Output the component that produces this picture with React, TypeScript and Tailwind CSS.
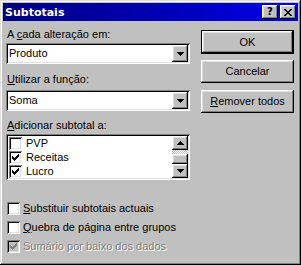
import React from "react";

const raised =
  "shadow-[inset_-1px_-1px_#000,inset_1px_1px_#fff,inset_-2px_-2px_#808080,inset_2px_2px_#dfdfdf]";
const sunken =
  "shadow-[inset_1px_1px_#808080,inset_-1px_-1px_#fff,inset_2px_2px_#000,inset_-2px_-2px_#dfdfdf]";

const DownArrow = () => (
  <svg width="7" height="4" viewBox="0 0 7 4" shapeRendering="crispEdges">
    <rect x="0" y="0" width="7" height="1" fill="#000" />
    <rect x="1" y="1" width="5" height="1" fill="#000" />
    <rect x="2" y="2" width="3" height="1" fill="#000" />
    <rect x="3" y="3" width="1" height="1" fill="#000" />
  </svg>
);

const UpArrow = () => (
  <svg width="7" height="4" viewBox="0 0 7 4" shapeRendering="crispEdges">
    <rect x="3" y="0" width="1" height="1" fill="#000" />
    <rect x="2" y="1" width="3" height="1" fill="#000" />
    <rect x="1" y="2" width="5" height="1" fill="#000" />
    <rect x="0" y="3" width="7" height="1" fill="#000" />
  </svg>
);

const Check = ({ color = "#000" }: { color?: string }) => (
  <svg width="7" height="7" viewBox="0 0 7 7" shapeRendering="crispEdges">
    <rect x="6" y="0" width="1" height="1" fill={color} />
    <rect x="5" y="1" width="2" height="1" fill={color} />
    <rect x="0" y="2" width="1" height="1" fill={color} />
    <rect x="4" y="2" width="3" height="1" fill={color} />
    <rect x="0" y="3" width="2" height="1" fill={color} />
    <rect x="3" y="3" width="3" height="1" fill={color} />
    <rect x="0" y="4" width="5" height="1" fill={color} />
    <rect x="1" y="5" width="3" height="1" fill={color} />
    <rect x="2" y="6" width="1" height="1" fill={color} />
  </svg>
);

const CheckBox = ({
  checked,
  disabled,
}: {
  checked?: boolean;
  disabled?: boolean;
}) => (
  <div
    className={`w-[13px] h-[13px] shrink-0 flex items-center justify-center ${sunken} ${
      disabled ? "bg-[#c0c0c0]" : "bg-white"
    }`}
  >
    {checked && <Check color={disabled ? "#808080" : "#000"} />}
  </div>
);

const Combo = ({ value }: { value: string }) => (
  <div className={`h-[21px] bg-white flex items-center p-[2px] ${sunken}`}>
    <span className="flex-1 pl-[1px]">{value}</span>
    <div className={`w-[16px] h-[17px] bg-[#c0c0c0] flex items-center justify-center ${raised}`}>
      <DownArrow />
    </div>
  </div>
);

const items = [
  { label: "PVP", checked: false },
  { label: "Receitas", checked: true },
  { label: "Lucro", checked: true },
];

const App = () => {
  return (
    <div className="w-[301px] h-[265px] bg-[#c0c0c0] p-[3px] shadow-[inset_-1px_-1px_#000,inset_1px_1px_#dfdfdf,inset_-2px_-2px_#808080,inset_2px_2px_#fff] font-['Liberation_Sans',sans-serif] text-[11px] leading-[13px] text-black overflow-hidden">
      {/* Title bar */}
      <div className="h-[18px] flex items-center justify-between pl-[2px] pr-[2px] bg-linear-to-r from-[#000080] to-[#0000e8]">
        <span className="font-['DejaVu_Sans',sans-serif] font-bold text-white text-[11px]">
          Subtotais
        </span>
        <div className="flex gap-[2px]">
          <div className={`w-[16px] h-[14px] bg-[#c0c0c0] flex items-center justify-center ${raised}`}>
            <span className="font-['DejaVu_Sans',sans-serif] font-bold text-[10px] leading-[10px] pb-[1px]">?</span>
          </div>
          <div className={`w-[16px] h-[14px] bg-[#c0c0c0] flex items-center justify-center ${raised}`}>
            <svg width="8" height="7" viewBox="0 0 8 7" shapeRendering="crispEdges">
              <path d="M0 0h2v1h-2zM6 0h2v1h-2zM1 1h2v1h-2zM5 1h2v1h-2zM2 2h4v1h-4zM3 3h2v1h-2zM2 4h4v1h-4zM1 5h2v1h-2zM5 5h2v1h-2zM0 6h2v1h-2zM6 6h2v1h-2z" fill="#000" />
            </svg>
          </div>
        </div>
      </div>

      <div className="flex pl-[3px]">
        {/* Left column */}
        <div className="w-[184px]">
          <div className="mt-[7px] pl-[1px]">
            A <span className="underline">c</span>ada alteração em:
          </div>
          <div className="mt-[2px]">
            <Combo value="Produto" />
          </div>

          <div className="mt-[9px] pl-[1px]">
            <span className="underline">U</span>tilizar a função:
          </div>
          <div className="mt-[4px]">
            <Combo value="Soma" />
          </div>

          <div className="mt-[8px] pl-[1px]">
            <span className="underline">A</span>dicionar subtotal a:
          </div>
          <div className={`mt-[2px] h-[46px] bg-white p-[2px] flex ${sunken}`}>
            <div className="flex-1 pl-[1px]">
              {items.map((it) => (
                <div key={it.label} className="h-[14px] flex items-center gap-[4px]">
                  <CheckBox checked={it.checked} />
                  <span>{it.label}</span>
                </div>
              ))}
            </div>
            <div className="w-[16px] flex flex-col">
              <div className={`h-[14px] bg-[#c0c0c0] flex items-center justify-center ${raised}`}>
                <UpArrow />
              </div>
              <div className="h-[4px] bg-[repeating-conic-gradient(#c0c0c0_0_25%,#fff_0_50%)] bg-[length:2px_2px]" />
              <div className={`h-[10px] bg-[#c0c0c0] ${raised}`} />
              <div className={`h-[14px] bg-[#c0c0c0] flex items-center justify-center ${raised}`}>
                <DownArrow />
              </div>
            </div>
          </div>

          <div className="mt-[22px] flex flex-col gap-[6px] pl-[1px]">
            <div className="flex items-center gap-[3px]">
              <CheckBox />
              <span>
                <span className="underline">S</span>ubstituir subtotais actuais
              </span>
            </div>
            <div className="flex items-center gap-[3px]">
              <CheckBox />
              <span>
                <span className="underline">Q</span>uebra de página entre grupos
              </span>
            </div>
            <div className="flex items-center gap-[3px]">
              <CheckBox checked disabled />
              <span className="text-[#808080] [text-shadow:1px_1px_0_#fff]">
                Sumário por baixo dos dados
              </span>
            </div>
          </div>
        </div>

        {/* Right column */}
        <div className="ml-[11px] w-[93px] flex flex-col">
          <div className="mt-[9px] h-[24px] border border-black">
            <div className={`h-full flex items-center justify-center ${raised}`}>OK</div>
          </div>
          <div className={`mt-[6px] h-[23px] flex items-center justify-center ${raised}`}>
            Cancelar
          </div>
          <div className={`mt-[7px] h-[23px] flex items-center justify-center ${raised}`}>
            <span>
              <span className="underline">R</span>emover todos
            </span>
          </div>
        </div>
      </div>
    </div>
  );
};

export default App;
